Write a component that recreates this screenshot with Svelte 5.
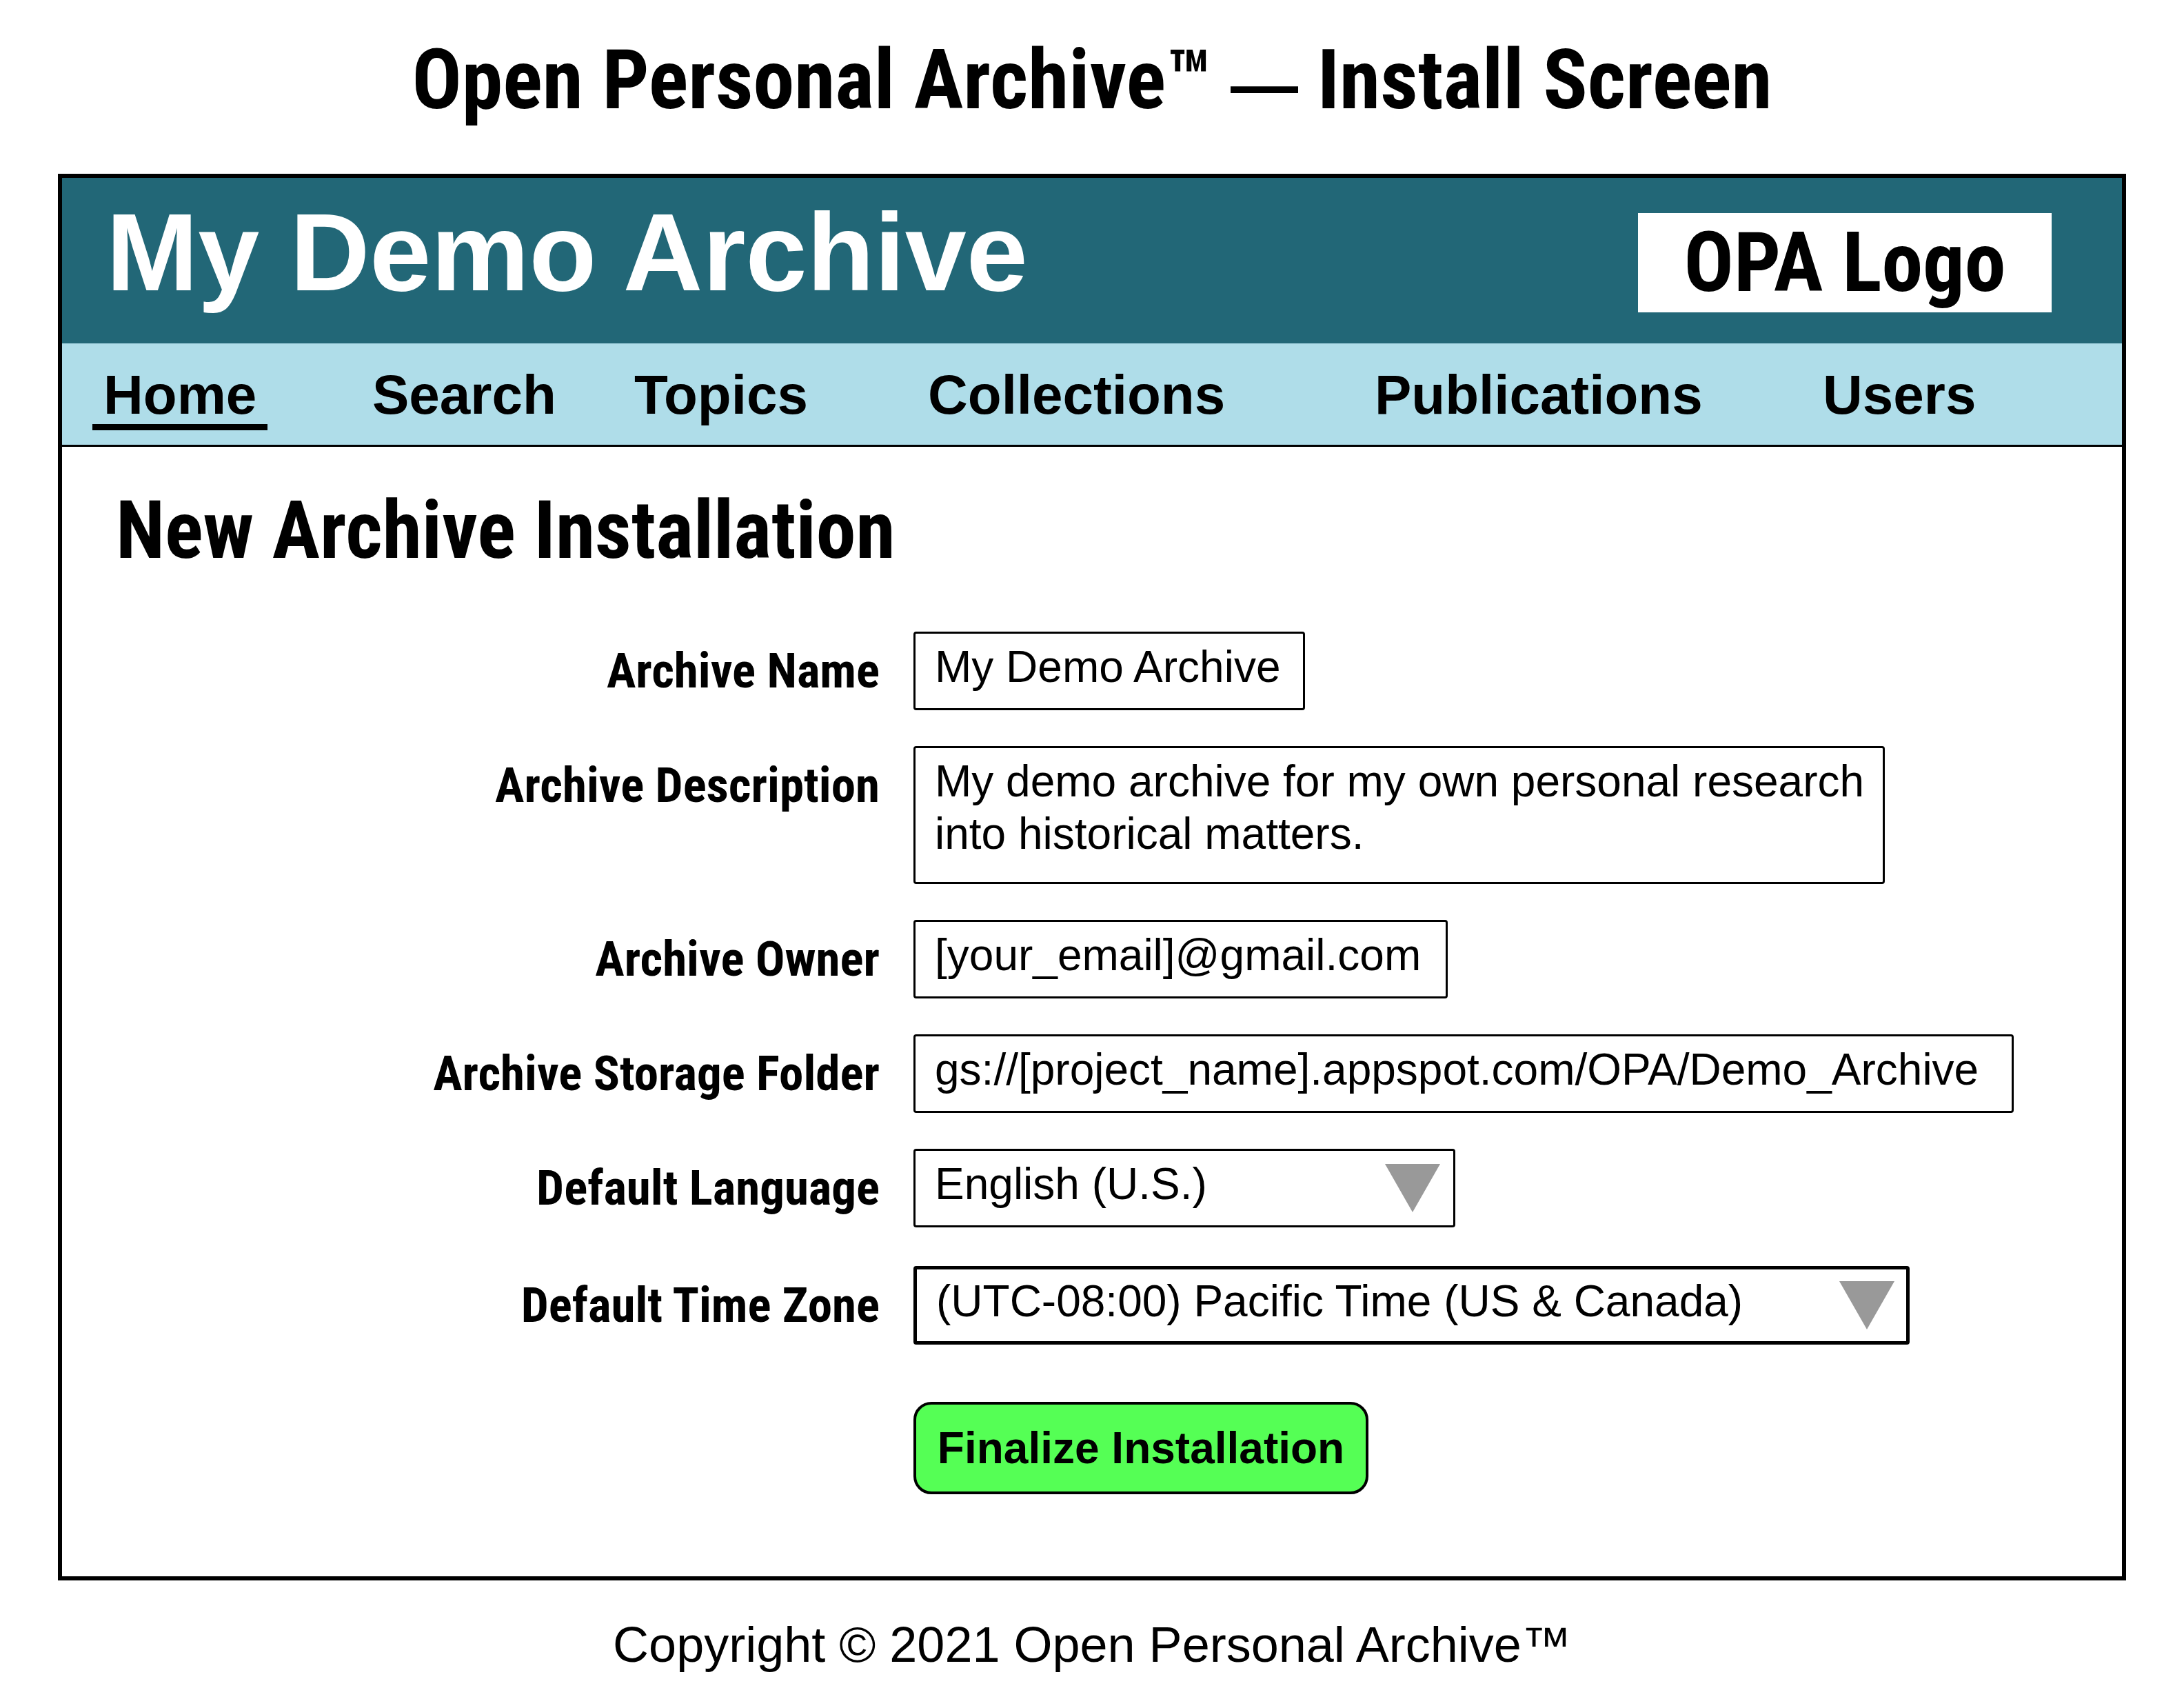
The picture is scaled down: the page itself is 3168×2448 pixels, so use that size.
<script>
  const tabs = ['Home', 'Search', 'Topics', 'Collections', 'Publications', 'Users'];
  let current = $state('Home');
  let archiveName = $state('My Demo Archive');
  let description = $state('My demo archive for my own personal research into historical matters.');
  let owner = $state('[your_email]@gmail.com');
  let folder = $state('gs://[project_name].appspot.com/OPA/Demo_Archive');
</script>

{#snippet arrow()}
  <svg class="arrow" viewBox="0 0 80 70" aria-hidden="true"><path d="M0 0H80L40 70Z" /></svg>
{/snippet}

<div class="page">
  <h1 class="page-title">Open Personal Archive™ <span class="dash">—</span> Install Screen</h1>

  <main class="frame">
    <header class="banner">
      <div class="site-name">My Demo Archive</div>
      <div class="logo">OPA Logo</div>
    </header>

    <nav class="tabs" aria-label="Main">
      {#each tabs as tab}
        <a
          href="#{tab.toLowerCase()}"
          class="tab"
          class:active={tab === current}
          aria-current={tab === current ? 'page' : undefined}
          onclick={() => (current = tab)}>{tab}</a>
      {/each}
    </nav>

    <section class="content">
      <h2 class="heading">New Archive Installation</h2>

      <form class="form" onsubmit={(e) => e.preventDefault()}>
        <label for="name">Archive Name</label>
        <input id="name" class="box name" type="text" bind:value={archiveName} />

        <label for="description">Archive Description</label>
        <textarea id="description" class="box description" rows="2" spellcheck="false" bind:value={description}></textarea>

        <label for="owner">Archive Owner</label>
        <input id="owner" class="box owner" type="text" bind:value={owner} />

        <label for="folder">Archive Storage Folder</label>
        <input id="folder" class="box folder" type="text" bind:value={folder} />

        <label for="language">Default Language</label>
        <div class="picker language">
          <select id="language" class="box"><option>English (U.S.)</option></select>
          {@render arrow()}
        </div>

        <label for="zone" class="spaced">Default Time Zone</label>
        <div class="picker zone spaced">
          <select id="zone" class="box"><option>(UTC-08:00) Pacific Time (US &amp; Canada)</option></select>
          {@render arrow()}
        </div>

        <button class="submit" type="submit">Finalize Installation</button>
      </form>
    </section>
  </main>

  <footer class="footer">Copyright © 2021 Open Personal Archive™</footer>
</div>

<style>
  :global(body) {
    background: #fff;
  }

  .page {
    box-sizing: border-box;
    min-height: 100vh;
    padding: 44px 84px 0;
    color: #000;
    font-family: 'Liberation Sans', Arial, sans-serif;
  }

  .page *,
  .page *::before {
    box-sizing: border-box;
  }

  .page-title,
  .heading,
  .logo,
  label {
    margin: 0;
    font-family: 'Roboto Condensed', 'Arial Narrow', 'Liberation Sans', sans-serif;
    font-weight: bold;
    font-size: 120px;
    line-height: 144px;
  }

  .page-title {
    padding-bottom: 64px;
    text-align: center;
  }

  .dash {
    font-family: 'Liberation Sans', Arial, sans-serif;
    font-size: 98px;
    line-height: 98px;
  }

  .frame {
    border: 6px solid #000;
  }

  .banner {
    display: flex;
    align-items: center;
    justify-content: space-between;
    height: 240px;
    padding: 6px 102px 0 64px;
    background: #226777;
  }

  .site-name {
    padding-bottom: 30px;
    color: #fff;
    font-weight: bold;
    font-size: 160px;
    line-height: 184px;
  }

  .logo {
    width: 600px;
    background: #fff;
    text-align: center;
  }

  .tabs {
    display: grid;
    grid-template-columns: 390fr 380fr 426fr 648fr 650fr 450fr;
    justify-items: start;
    height: 150px;
    padding: 24px 0 0 44px;
    border-bottom: 3px solid #000;
    background: #afdde9;
  }

  .tab {
    height: 102px;
    padding: 0 16px;
    color: #000;
    font-weight: bold;
    font-size: 80px;
    line-height: 102px;
    text-decoration: none;
  }

  .active {
    border-bottom: 9px solid #000;
  }

  .heading {
    font-size: 116px;
  }

  .content {
    padding: 49px 78px 119px;
  }

  .form {
    display: grid;
    grid-template-columns: 1108px 1fr;
    column-gap: 49px;
    row-gap: 52px;
    align-items: start;
    justify-items: start;
    padding-top: 75px;
  }

  label {
    justify-self: end;
    font-size: 71px;
    line-height: 114px;
  }

  .box {
    width: 100%;
    height: 114px;
    margin: 0;
    padding: 0 20px 12px 28px;
    border: 3px solid #000;
    border-radius: 4px;
    background: #fff;
    color: #000;
    font-family: inherit;
    font-size: 64px;
    line-height: 76px;
  }

  .name {
    width: 568px;
  }

  .description {
    display: block;
    width: 1409px;
    height: 200px;
    padding-top: 10px;
    overflow: hidden;
    resize: none;
  }

  .owner {
    width: 775px;
  }

  .folder {
    width: 1596px;
  }

  .picker {
    display: grid;
  }

  .picker > * {
    grid-area: 1 / 1;
  }

  .picker select {
    appearance: none;
  }

  .language {
    width: 786px;
  }

  .zone {
    width: 1445px;
  }

  .spaced {
    margin-top: 4px;
  }

  .zone .box {
    border-width: 5px;
  }

  .arrow {
    width: 80px;
    height: 70px;
    margin: 22px 22px 0 0;
    justify-self: end;
    pointer-events: none;
    fill: #999;
  }

  .submit {
    grid-column: 2;
    width: 660px;
    height: 134px;
    margin-top: 31px;
    padding: 0;
    border: 4px solid #000;
    border-radius: 26px;
    background: #5f5;
    color: #000;
    font: bold 64px/76px 'Liberation Sans', Arial, sans-serif;
  }

  .footer {
    padding: 51px 0 20px;
    font-size: 72px;
    line-height: 84px;
    text-align: center;
  }
</style>
